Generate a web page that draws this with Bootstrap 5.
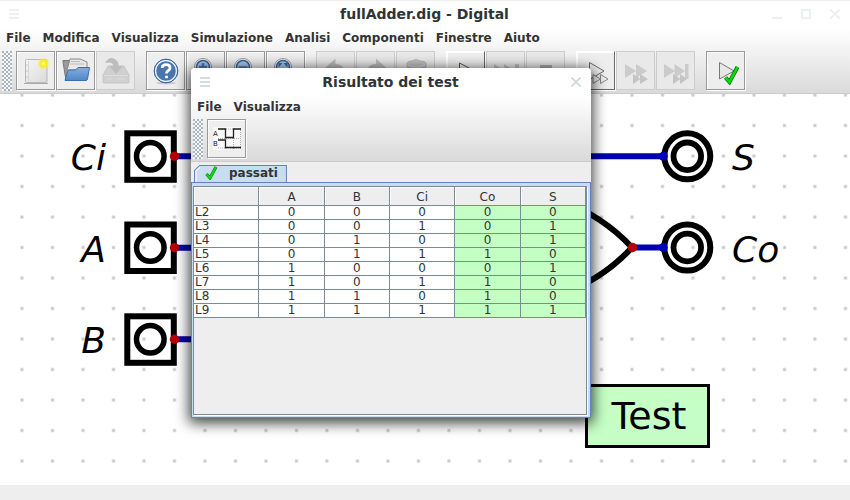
<!DOCTYPE html>
<html lang="it">
<head>
<meta charset="utf-8">
<meta name="viewport" content="width=device-width, initial-scale=1">
<title>fullAdder.dig - Digital</title>
<link href="https://cdn.jsdelivr.net/npm/bootstrap@5.3.0/dist/css/bootstrap.min.css" rel="stylesheet">
<style>
body { font-family: "DejaVu Sans", sans-serif; font-size: 12px; line-height: 14px; color: #333; background: #eee; }
.app { min-height: 100vh; }
.chrome { background: linear-gradient(#fff 28px, #dadada 92px); border-bottom: 1px solid #ccc; padding-bottom: 2px; }
.app > .chrome { border-top: 1px solid #f0f0f0; }
.titlebar { height: 28px; padding: 0 10px 0 9px; font-size: 14px; line-height: 26px; font-weight: bold; color: #2d3436; }
.app > .chrome .titlebar { height: 26px; }
.titlebar button { border: 0; padding: 0; background: none; width: 10px; height: 10px; color: #ecf0f1; line-height: 0; }
.dialog-win .titlebar button { color: #d3dce0; }
.titlebar .side { width: 70px; gap: 19px; }
.titlebar svg, .tool svg { display: block; fill: none; }
.menus { height: 23px; padding: 0 6px 1px; gap: 12px; }
.app > .chrome .menus { height: 24px; padding-bottom: 2px; }
.menus a { color: #333; font-weight: bold; text-decoration: none; }
.tools { padding-left: 2px; }
.grip { width: 10px; height: 40px; margin-right: 4px; background-color: #f8f8f8; background-image: radial-gradient(circle at 1px 1px, #a9b3bd 1px, transparent 1px), radial-gradient(circle at 3px 3px, #a9b3bd 1px, transparent 1px); background-size: 4px 4px; }
.group { gap: 1px; margin-right: 11px; }
.tool { width: 39px; height: 39px; padding: 0; border: 1px solid #999; background: #eee; box-shadow: inset 1px 1px #fff, 1px 1px #fff; }
.tool:disabled { border-color: #ccc; box-shadow: none; background: #e9e9e9; }
.tool.raised { border-color: #fff #666 #666 #fff; }
.canvas { min-height: 391px; background: #fff; overflow: hidden; }
.canvas svg { flex: 1 1 auto; min-height: 391px; }
.sign { font-size: 36px; font-style: italic; }
.status { height: 15px; background: #eee; }
.dialog-win { left: 191px; top: 68px; width: 400px; background: #eee; border-radius: 4px 4px 0 0; box-shadow: 0 3px 14px 2px rgba(0,0,0,.75); }
.dialog-win .chrome { border-radius: 4px 4px 0 0; }
.tabs { padding: 2px 3px 0; }
.tab-btn { height: 18px; padding: 0 9px 0 11px; gap: 10px; border: 0; background: none; font-weight: bold; color: #333; position: relative; line-height: 18px; }
.tab-btn .shape { left: 0; top: 0; }
.tab-btn span, .tab-btn .tick { position: relative; }
.pane { border: 1px solid #6382bf; background: #c8ddf2; padding: 3px 3px 2px 1px; }
.scroller { border: 1px solid #7a8a99; box-shadow: 1px 1px #fff; background: #eee; min-height: 229px; }
.truth { width: 100%; table-layout: fixed; border-collapse: separate; border-spacing: 0; text-align: center; }
.truth th, .truth td { border: solid #7a8a99; border-width: 0 1px 1px 0; padding: 0; font-weight: normal; line-height: 13px; height: 14px; }
.truth thead th { height: 19px; background: #eee; box-shadow: inset 1px 1px #fff; padding-top: 2px; }
.truth tbody { background: #fff; }
.truth tbody th { text-align: left; padding-left: 1px; }
.truth .pass { background: #c4ffc4; }
</style>
<script src="https://cdn.jsdelivr.net/npm/bootstrap@5.3.0/dist/js/bootstrap.bundle.min.js"></script>
</head>
<body>
<div class="app d-flex flex-column">
  <header class="chrome">
    <div class="titlebar d-flex align-items-center justify-content-between">
      <div class="side d-flex"><button type="button" aria-label="Menu finestra"><svg width="10" height="10" stroke="currentColor" stroke-width="2"><path d="M0 1h10M0 5h10M0 9h10"/></svg></button></div>
      <div>fullAdder.dig - Digital</div>
      <div class="side d-flex justify-content-end">
        <button type="button" aria-label="Riduci"><svg width="10" height="10" stroke="currentColor" stroke-width="2"><path d="M0 9h10"/></svg></button>
        <button type="button" aria-label="Ingrandisci"><svg width="10" height="10" stroke="currentColor" stroke-width="2"><path d="M1 1h8v8H1z"/></svg></button>
        <button type="button" aria-label="Chiudi"><svg width="10" height="10" stroke="currentColor" stroke-width="2"><path d="M.5.5l9 9M9.500.5l-9 9"/></svg></button>
      </div>
    </div>
    <nav class="menus d-flex align-items-center" aria-label="Menu principale">
      <a href="#">File</a><a href="#">Modifica</a><a href="#">Visualizza</a><a href="#">Simulazione</a><a href="#">Analisi</a><a href="#">Componenti</a><a href="#">Finestre</a><a href="#">Aiuto</a>
    </nav>
    <div class="tools d-flex">
      <div class="grip"></div>
      <div class="group d-flex">
        <button class="tool" type="button" aria-label="Nuovo"><svg width="37" height="37" viewBox="1 1 37 37">
          <defs><linearGradient id="paper" x2="1" y2="1"><stop stop-color="#f6f6f6"/><stop offset="1" stop-color="#dadada"/></linearGradient><radialGradient id="glow"><stop stop-color="#fffbd0"/><stop offset=".3" stop-color="#ffef20"/><stop offset=".6" stop-color="#f5ea30" stop-opacity=".85"/><stop offset="1" stop-color="#fff36b" stop-opacity="0"/></radialGradient></defs>
          <path d="M8 32.500h24" stroke="#aaa"/><rect x="9.500" y="8.500" width="21.500" height="23" rx="1" fill="url(#paper)" stroke="#b8b8b8"/><path d="M12.500 10v20" stroke="#d4d4d4"/><circle cx="11" cy="14" r=".6" fill="#aaa"/><circle cx="11" cy="20" r=".6" fill="#aaa"/><circle cx="11" cy="26" r=".6" fill="#aaa"/><circle cx="27.500" cy="12.500" r="6.500" fill="url(#glow)"/></svg></button>
        <button class="tool" type="button" aria-label="Apri"><svg width="37" height="37" viewBox="1 1 37 37">
          <defs><linearGradient id="folder" y2="1" x2="0"><stop stop-color="#84aedd"/><stop offset="1" stop-color="#4f88c4"/></linearGradient></defs>
          <path d="M7 11V9.500h6l2 3h15v17H10z" fill="#999" stroke="#777"/><path d="M14 8h10l7 3v8H11z" fill="#e8e8e8" stroke="#888"/><path d="M15 10.500h9M14 13h14" stroke="#bbb"/><path d="M11.500 20.500q.5-1.500 2-1.500h6l2.500-2.500h11.500L31.500 28q-.3 1.500-2 1.500H9z" fill="url(#folder)" stroke="#3a6fae"/></svg></button>
        <button class="tool" type="button" disabled aria-label="Salva"><svg width="37" height="37" viewBox="1 1 37 37"><path d="M7 24l5-9h16l5 9v7q0 1-1 1H8q-1 0-1-1z" fill="#d0d0d0" stroke="#c6c6c6"/><path d="M9 12q5-8 11-3 3 2 2.500 6h4.500l-7 8-7-8h4.500q-1-5-8.500-3z" fill="#bdbdbd"/><path d="M8 24.500h24M21 28h8M11 28h6" stroke="#dcdcdc"/></svg></button>
      </div>
      <div class="group d-flex">
        <button class="tool" type="button" aria-label="Aiuto"><svg width="37" height="37" viewBox="1 1 37 37"><ellipse cx="20" cy="32" rx="10" ry="1.500" fill="#ccc"/><circle cx="20" cy="20" r="11.500" fill="#4a76b0" stroke="#36618f"/><circle cx="20" cy="20" r="10.500" stroke="#e8eef6" stroke-width="1.500"/><circle cx="20" cy="20" r="11.900" stroke="#3a679f"/><path d="M16.200 17q.2-3.300 3.900-3.300 4 0 4 3.200 0 1.800-2.300 3.100-1.300.8-1.300 2.500M20.500 24.700v2.500" stroke="#fff" stroke-width="2.800"/></svg></button>
        <button class="tool" type="button" aria-label="Ingrandisci vista"><svg width="37" height="37" viewBox="1 1 37 37"><circle cx="17" cy="16" r="8.500" fill="#fff" stroke="#999"/><circle cx="17" cy="16" r="6.500" fill="#a9c6e8" stroke="#3465a4" stroke-width="1.500"/><path d="M13 16h8M17 12v8" stroke="#4a79b5" stroke-width="2.500"/><path d="M23 23l8 8" stroke="#777" stroke-width="3"/></svg></button>
        <button class="tool" type="button" aria-label="Riduci vista"><svg width="37" height="37" viewBox="1 1 37 37"><circle cx="17" cy="16" r="8.500" fill="#fff" stroke="#999"/><circle cx="17" cy="16" r="6.500" fill="#a9c6e8" stroke="#3465a4" stroke-width="1.500"/><path d="M12.500 16.500h9" stroke="#4a79b5" stroke-width="2.500"/><path d="M23 23l8 8" stroke="#777" stroke-width="3"/></svg></button>
        <button class="tool" type="button" aria-label="Adatta vista"><svg width="37" height="37" viewBox="1 1 37 37"><circle cx="17" cy="16" r="8.500" fill="#fff" stroke="#999"/><circle cx="17" cy="16" r="6.500" fill="#a9c6e8" stroke="#3465a4" stroke-width="1.500"/><path d="M12.500 12h4l-4 4.500zM21.500 12h-4l4 4.500z" fill="#3465a4"/><path d="M23 23l8 8" stroke="#777" stroke-width="3"/></svg></button>
      </div>
      <div class="group d-flex">
        <button class="tool" type="button" disabled aria-label="Annulla"><svg width="37" height="37" viewBox="1 1 37 37"><path d="M8.500 17.500L19.500 7.500V13q11 0 9 15-3-7-9-6v6z" fill="#bdbdbd"/></svg></button>
        <button class="tool" type="button" disabled aria-label="Ripeti"><svg width="37" height="37" viewBox="1 1 37 37"><path d="M31 17.500L20 7.500V13q-11 0-9 15 3-7 9-6v6z" fill="#bdbdbd"/></svg></button>
        <button class="tool" type="button" disabled aria-label="Elimina"><svg width="37" height="37" viewBox="1 1 37 37"><path d="M11 12q1-2 5-2 4-3 8 0 5 0 6 2v4l-2 2v12H13V18l-2-2z" fill="#c2c2c2" stroke="#b4b4b4"/><path d="M12 14q8 4 17 0" stroke="#ddd"/></svg></button>
      </div>
      <div class="group d-flex">
        <button class="tool raised" type="button" aria-label="Avvia"><svg width="37" height="37" viewBox="1 1 37 37"><path d="M13.500 12l16 8.500-16 8.500z" fill="#f0f0f0" stroke="#555"/></svg></button>
        <button class="tool" type="button" disabled aria-label="Avanza"><svg width="37" height="37" viewBox="1 1 37 37"><path d="M8 13l11 7-11 7zM18 13l11 7-11 7zM29 13h4v14h-4z" fill="#c2c2c2"/></svg></button>
        <button class="tool" type="button" disabled aria-label="Ferma"><svg width="37" height="37" viewBox="1 1 37 37"><path d="M14 14h12v12H14z" fill="#adadad"/></svg></button>
      </div>
      <div class="group d-flex">
        <button class="tool raised" type="button" aria-label="Avvia veloce"><svg width="37" height="37" viewBox="1 1 37 37"><path d="M13.500 11.500l14.500 8.500-14.500 8.500z" fill="#eee" stroke="#666"/><path d="M17 23.500l7.500 4.500-7.500 4.500zM24.500 23.500l7.500 4.500-7.500 4.500z" fill="#eee" stroke="#888"/></svg></button>
        <button class="tool" type="button" disabled aria-label="Avanza veloce"><svg width="37" height="37" viewBox="1 1 37 37"><path d="M9 13l11 7-11 7zM20 13l11 7-11 7z" fill="#cbcbcb"/><path d="M17 23l7.500 5-7.500 5zM24 23l8 5-8 5z" fill="#c4c4c4"/></svg></button>
        <button class="tool" type="button" disabled aria-label="Avanza fino a stop"><svg width="37" height="37" viewBox="1 1 37 37"><path d="M8 13l11 7-11 7zM18.500 13l10.500 7-10.500 7zM29 13h3.500v15H29z" fill="#cbcbcb"/><path d="M17 23l7.500 5-7.500 5zM24 23l7 5-7 5z" fill="#c4c4c4"/></svg></button>
      </div>
      <div class="group d-flex">
        <button class="tool" type="button" aria-label="Esegui test"><svg width="37" height="37" viewBox="1 1 37 37"><path d="M13.500 11.500l14.500 8.500-14.500 8z" fill="#e6e8e4" stroke="#777"/><path d="M19.500 26.500l4 4.500 8-15" stroke="#076b07" stroke-width="4"/><path d="M19.500 26.500l4 4.500 8-15" stroke="#00e000" stroke-width="2.500"/></svg></button>
      </div>
    </div>
  </header>

  <main class="canvas d-flex flex-grow-1">
    <svg width="100%" font-family="DejaVu Sans, sans-serif" fill="none" role="img" aria-label="Circuito">
      <defs>
        <pattern id="dots" x="6.500" y="16.500" width="30.500" height="30.500" patternUnits="userSpaceOnUse"><rect x="14" y="13.500" width="3" height="3" fill="#c8c8c8"/></pattern>
        <g id="in"><rect x="-23" y="-23" width="46.500" height="46.500" stroke="#000" stroke-width="6"/><circle r="13.800" stroke="#000" stroke-width="5.500"/></g>
        <g id="out"><circle r="23" stroke="#000" stroke-width="6"/><circle r="13.800" stroke="#000" stroke-width="5.800"/><circle cx="-24" r="4.500" fill="#0000b8"/></g>
      </defs>
      <rect width="100%" height="100%" fill="url(#dots)"/>
      <g stroke="#0000b4" stroke-width="6"><path d="M174 62.300H220M174 153.700H220M174 245.200H220M560 62.300H663M633 153.500H663"/></g>
      <path d="M560 106Q603 122 632 153.500Q603 185 560 201" stroke="#000" stroke-width="6"/>
      <use href="#in" x="150.300" y="62.300"/><use href="#in" x="150.300" y="153.500"/><use href="#in" x="150.300" y="245.300"/>
      <use href="#out" x="687.300" y="62.300"/><use href="#out" x="687.300" y="153.500"/>
      <g fill="#b40000"><circle cx="174.500" cy="62.300" r="4.700"/><circle cx="174.500" cy="153.700" r="4.700"/><circle cx="174.500" cy="245.300" r="4.700"/><circle cx="632.500" cy="153.500" r="4.700"/></g>
      <g class="sign" fill="#000"><text x="106" y="76" text-anchor="end">Ci</text><text x="106" y="168" text-anchor="end">A</text><text x="106" y="259" text-anchor="end">B</text><text x="732" y="76">S</text><text x="732" y="168">Co</text></g>
      <rect x="586.500" y="291.500" width="122" height="61" fill="#c4ffc4" fill-opacity=".98" stroke="#000" stroke-width="3"/>
      <text x="649" y="335" font-size="38" fill="#000" text-anchor="middle">Test</text>
    </svg>
  </main>
  <footer class="status"></footer>
</div>

<section class="dialog-win position-absolute" role="dialog" aria-label="Risultato dei test">
  <header class="chrome">
    <div class="titlebar d-flex align-items-center justify-content-between">
      <div class="side d-flex"><button type="button" aria-label="Menu finestra"><svg width="10" height="10" stroke="currentColor" stroke-width="2"><path d="M0 1h10M0 5h10M0 9h10"/></svg></button></div>
      <div>Risultato dei test</div>
      <div class="side d-flex justify-content-end"><button type="button" aria-label="Chiudi"><svg width="10" height="10" stroke="currentColor" stroke-width="2"><path d="M.5.5l9 9M9.500.5l-9 9"/></svg></button></div>
    </div>
    <nav class="menus d-flex align-items-center" aria-label="Menu dei risultati"><a href="#">File</a><a href="#">Visualizza</a></nav>
    <div class="tools d-flex">
      <div class="grip"></div>
      <button class="tool" type="button" aria-label="Mostra grafico"><svg width="37" height="37" viewBox="1 1 37 37"><rect x="6" y="8" width="28" height="23" fill="#f8f8f8"/><path d="M11 10h23M11 19.500h23M11 29h23M18.500 9v21M26.500 9v21M33.500 9v21" stroke="#aaa" stroke-dasharray="1 1"/><path d="M11 10h7.500v8.500h8V10h7.500M11 21h7.500v7.500H34" stroke="#222" stroke-width="1.300"/><text x="6" y="17" font-size="7" fill="#222" font-family="DejaVu Sans, sans-serif">A</text><text x="6" y="27" font-size="7" fill="#222" font-family="DejaVu Sans, sans-serif">B</text></svg></button>
    </div>
  </header>
  <div class="tabs d-flex" role="tablist">
    <button class="tab-btn d-flex align-items-center" type="button" role="tab" aria-selected="true">
      <svg class="shape position-absolute" width="100%" height="100%" viewBox="0 0 92 18" preserveAspectRatio="none"><path d="M.5 19V6.500l5-5h86V19z" fill="#c8ddf2" stroke="#6382bf"/><path d="M2 18.500V7l4-4" stroke="#fff" fill="none"/></svg>
      <svg class="tick" width="14" height="14" fill="none"><path d="M1.500 8l3.500 4 6-11" stroke="#087308" stroke-width="3"/><path d="M1.500 8l3.500 4 6-11" stroke="#00e000" stroke-width="2"/></svg>
      <span>passati</span>
    </button>
  </div>
  <div class="pane">
    <div class="scroller">
      <table class="truth">
        <thead><tr><th scope="col"></th><th scope="col">A</th><th scope="col">B</th><th scope="col">Ci</th><th scope="col">Co</th><th scope="col">S</th></tr></thead>
        <tbody>
          <tr><th scope="row">L2</th><td>0</td><td>0</td><td>0</td><td class="pass">0</td><td class="pass">0</td></tr>
          <tr><th scope="row">L3</th><td>0</td><td>0</td><td>1</td><td class="pass">0</td><td class="pass">1</td></tr>
          <tr><th scope="row">L4</th><td>0</td><td>1</td><td>0</td><td class="pass">0</td><td class="pass">1</td></tr>
          <tr><th scope="row">L5</th><td>0</td><td>1</td><td>1</td><td class="pass">1</td><td class="pass">0</td></tr>
          <tr><th scope="row">L6</th><td>1</td><td>0</td><td>0</td><td class="pass">0</td><td class="pass">1</td></tr>
          <tr><th scope="row">L7</th><td>1</td><td>0</td><td>1</td><td class="pass">1</td><td class="pass">0</td></tr>
          <tr><th scope="row">L8</th><td>1</td><td>1</td><td>0</td><td class="pass">1</td><td class="pass">0</td></tr>
          <tr><th scope="row">L9</th><td>1</td><td>1</td><td>1</td><td class="pass">1</td><td class="pass">1</td></tr>
        </tbody>
      </table>
    </div>
  </div>
</section>
</body>
</html>
